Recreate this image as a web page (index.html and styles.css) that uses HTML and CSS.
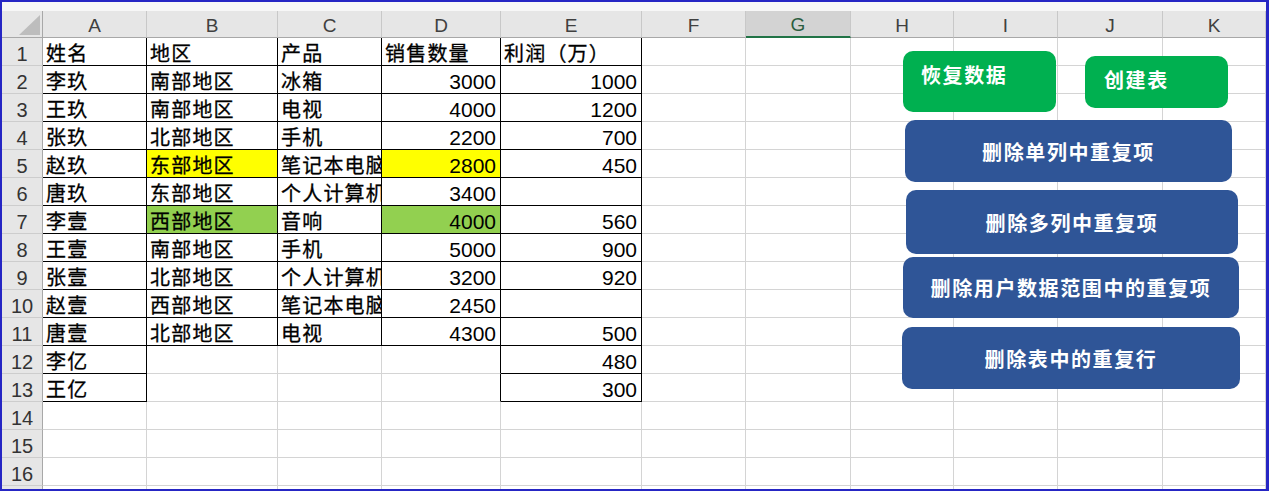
FILE: index.html
```html
<!DOCTYPE html>
<html lang="zh-CN">
<head>
<meta charset="utf-8">
<title>删除重复项</title>
<link rel="stylesheet" href="styles.css">
</head>
<body>
<div class="frame">
  <div class="topstrip"></div>
  <div class="sheet">
    <div class="corner"><svg width="21" height="20" viewBox="0 0 21 20"><polygon points="21,0 21,20 0,20" fill="#bdbdbd"/></svg></div>
    <div class="ch">A</div><div class="ch">B</div><div class="ch">C</div><div class="ch">D</div><div class="ch">E</div><div class="ch">F</div><div class="ch sel">G</div><div class="ch">H</div><div class="ch">I</div><div class="ch">J</div><div class="ch">K</div>

    <div class="rh">1</div><div class="c t b">姓名</div><div class="c t b">地区</div><div class="c t b">产品</div><div class="c t b">销售数量</div><div class="c t b">利润（万）</div><div class="c"></div><div class="c"></div><div class="c"></div><div class="c"></div><div class="c"></div><div class="c"></div>

    <div class="rh">2</div><div class="c t b">李玖</div><div class="c t b">南部地区</div><div class="c t b">冰箱</div><div class="c n b">3000</div><div class="c n b">1000</div><div class="c"></div><div class="c"></div><div class="c"></div><div class="c"></div><div class="c"></div><div class="c"></div>

    <div class="rh">3</div><div class="c t b">王玖</div><div class="c t b">南部地区</div><div class="c t b">电视</div><div class="c n b">4000</div><div class="c n b">1200</div><div class="c"></div><div class="c"></div><div class="c"></div><div class="c"></div><div class="c"></div><div class="c"></div>

    <div class="rh">4</div><div class="c t b">张玖</div><div class="c t b">北部地区</div><div class="c t b">手机</div><div class="c n b">2200</div><div class="c n b">700</div><div class="c"></div><div class="c"></div><div class="c"></div><div class="c"></div><div class="c"></div><div class="c"></div>

    <div class="rh">5</div><div class="c t b">赵玖</div><div class="c t b yellow">东部地区</div><div class="c t b">笔记本电脑</div><div class="c n b yellow">2800</div><div class="c n b">450</div><div class="c"></div><div class="c"></div><div class="c"></div><div class="c"></div><div class="c"></div><div class="c"></div>

    <div class="rh">6</div><div class="c t b">唐玖</div><div class="c t b">东部地区</div><div class="c t b">个人计算机</div><div class="c n b">3400</div><div class="c n b"></div><div class="c"></div><div class="c"></div><div class="c"></div><div class="c"></div><div class="c"></div><div class="c"></div>

    <div class="rh">7</div><div class="c t b">李壹</div><div class="c t b green">西部地区</div><div class="c t b">音响</div><div class="c n b green">4000</div><div class="c n b">560</div><div class="c"></div><div class="c"></div><div class="c"></div><div class="c"></div><div class="c"></div><div class="c"></div>

    <div class="rh">8</div><div class="c t b">王壹</div><div class="c t b">南部地区</div><div class="c t b">手机</div><div class="c n b">5000</div><div class="c n b">900</div><div class="c"></div><div class="c"></div><div class="c"></div><div class="c"></div><div class="c"></div><div class="c"></div>

    <div class="rh">9</div><div class="c t b">张壹</div><div class="c t b">北部地区</div><div class="c t b">个人计算机</div><div class="c n b">3200</div><div class="c n b">920</div><div class="c"></div><div class="c"></div><div class="c"></div><div class="c"></div><div class="c"></div><div class="c"></div>

    <div class="rh">10</div><div class="c t b">赵壹</div><div class="c t b">西部地区</div><div class="c t b">笔记本电脑</div><div class="c n b">2450</div><div class="c n b"></div><div class="c"></div><div class="c"></div><div class="c"></div><div class="c"></div><div class="c"></div><div class="c"></div>

    <div class="rh">11</div><div class="c t b">唐壹</div><div class="c t b">北部地区</div><div class="c t b">电视</div><div class="c n b">4300</div><div class="c n b">500</div><div class="c"></div><div class="c"></div><div class="c"></div><div class="c"></div><div class="c"></div><div class="c"></div>

    <div class="rh">12</div><div class="c t b">李亿</div><div class="c"></div><div class="c"></div><div class="c br"></div><div class="c n b">480</div><div class="c"></div><div class="c"></div><div class="c"></div><div class="c"></div><div class="c"></div><div class="c"></div>

    <div class="rh">13</div><div class="c t b">王亿</div><div class="c"></div><div class="c"></div><div class="c br"></div><div class="c n b">300</div><div class="c"></div><div class="c"></div><div class="c"></div><div class="c"></div><div class="c"></div><div class="c"></div>

    <div class="rh">14</div><div class="c"></div><div class="c"></div><div class="c"></div><div class="c"></div><div class="c"></div><div class="c"></div><div class="c"></div><div class="c"></div><div class="c"></div><div class="c"></div><div class="c"></div>

    <div class="rh">15</div><div class="c"></div><div class="c"></div><div class="c"></div><div class="c"></div><div class="c"></div><div class="c"></div><div class="c"></div><div class="c"></div><div class="c"></div><div class="c"></div><div class="c"></div>

    <div class="rh">16</div><div class="c"></div><div class="c"></div><div class="c"></div><div class="c"></div><div class="c"></div><div class="c"></div><div class="c"></div><div class="c"></div><div class="c"></div><div class="c"></div><div class="c"></div>

    <div class="rh">17</div><div class="c"></div><div class="c"></div><div class="c"></div><div class="c"></div><div class="c"></div><div class="c"></div><div class="c"></div><div class="c"></div><div class="c"></div><div class="c"></div><div class="c"></div>
  </div>

  <div class="btn btn-green btn-restore">恢复数据</div>
  <div class="btn btn-green btn-create">创建表</div>
  <div class="btn btn-blue btn-1">删除单列中重复项</div>
  <div class="btn btn-blue btn-2">删除多列中重复项</div>
  <div class="btn btn-blue btn-3">删除用户数据范围中的重复项</div>
  <div class="btn btn-blue btn-4">删除表中的重复行</div>
</div>
</body>
</html>
```

FILE: styles.css
```css
html, body {
  margin: 0;
  padding: 0;
  background: #ffffff;
}

.frame {
  position: relative;
  box-sizing: border-box;
  width: 1269px;
  height: 491px;
  border: 2px solid #2626c4;
  border-right-width: 3px;
  overflow: hidden;
  background: #ffffff;
  font-family: "Liberation Sans", "Noto Sans CJK SC", sans-serif;
}

.topstrip {
  height: 9px;
  background: #f7f7f7;
}

.sheet {
  display: grid;
  grid-template-columns: 41px 104px 131px 104px 119px 141px 104px 105px 103px 104px 105px 103px;
  grid-template-rows: 27px;
  grid-auto-rows: 28px;
}

.corner {
  box-sizing: border-box;
  background: #e6e6e6;
  border-right: 1px solid #a8a8a8;
  border-bottom: 1px solid #a8a8a8;
  display: flex;
  justify-content: flex-end;
  align-items: flex-end;
  padding: 0 2px 2px 0;
}

.corner svg {
  display: block;
}

.ch {
  box-sizing: border-box;
  background: #e6e6e6;
  border-right: 1px solid #c8c8c8;
  border-bottom: 1px solid #a8a8a8;
  text-align: center;
  font-size: 19px;
  color: #404040;
  padding-top: 3px;
  line-height: 23px;
}

.ch.sel {
  background: #d3d3d3;
  border-bottom: 2px solid #217346;
  color: #2b5e3f;
  line-height: 22px;
}

.rh {
  box-sizing: border-box;
  background: #e6e6e6;
  border-right: 1px solid #a8a8a8;
  border-bottom: 1px solid #cdcdcd;
  text-align: center;
  font-size: 20px;
  color: #333333;
  padding-top: 5px;
  line-height: 22px;
}

.c {
  box-sizing: border-box;
  border-right: 1px solid #d4d4d4;
  border-bottom: 1px solid #d4d4d4;
  padding: 4px 4px 0 4px;
  line-height: 23px;
  white-space: nowrap;
  overflow: hidden;
  color: #000000;
}

.t {
  font-family: "Noto Sans CJK SC", "Liberation Sans", sans-serif;
  font-size: 20px;
  letter-spacing: 1.2px;
  padding-top: 3px;
  padding-left: 3px;
  line-height: 24px;
  -webkit-text-stroke: 0.3px #000000;
}

.n {
  font-family: "Liberation Sans", sans-serif;
  font-size: 21px;
  text-align: right;
}

.b {
  border-right-color: #000000;
  border-bottom-color: #000000;
}

.br {
  border-right-color: #000000;
}

.yellow {
  background: #ffff00;
}

.green {
  background: #92d050;
}

.btn {
  position: absolute;
  box-sizing: border-box;
  border-radius: 10px;
  color: #ffffff;
  font-family: "Noto Sans CJK SC", "Liberation Sans", sans-serif;
  font-weight: 700;
  font-size: 20px;
  letter-spacing: 1.6px;
  white-space: nowrap;
}

.btn-green {
  background: #00b050;
  padding: 12px 0 0 18px;
  line-height: 24px;
}

.btn-blue {
  background: #2f5597;
  display: flex;
  align-items: center;
  justify-content: center;
}

.btn-restore {
  left: 901px;
  top: 49px;
  width: 153px;
  height: 61px;
}

.btn-create {
  left: 1083px;
  top: 54px;
  width: 143px;
  height: 52px;
  padding-left: 19px;
}

.btn-1 {
  left: 903px;
  top: 118px;
  width: 327px;
  height: 62px;
}

.btn-2 {
  left: 904px;
  top: 188px;
  width: 332px;
  height: 64px;
}

.btn-3 {
  left: 901px;
  top: 255px;
  width: 336px;
  height: 61px;
}

.btn-4 {
  left: 900px;
  top: 325px;
  width: 338px;
  height: 62px;
}
```
